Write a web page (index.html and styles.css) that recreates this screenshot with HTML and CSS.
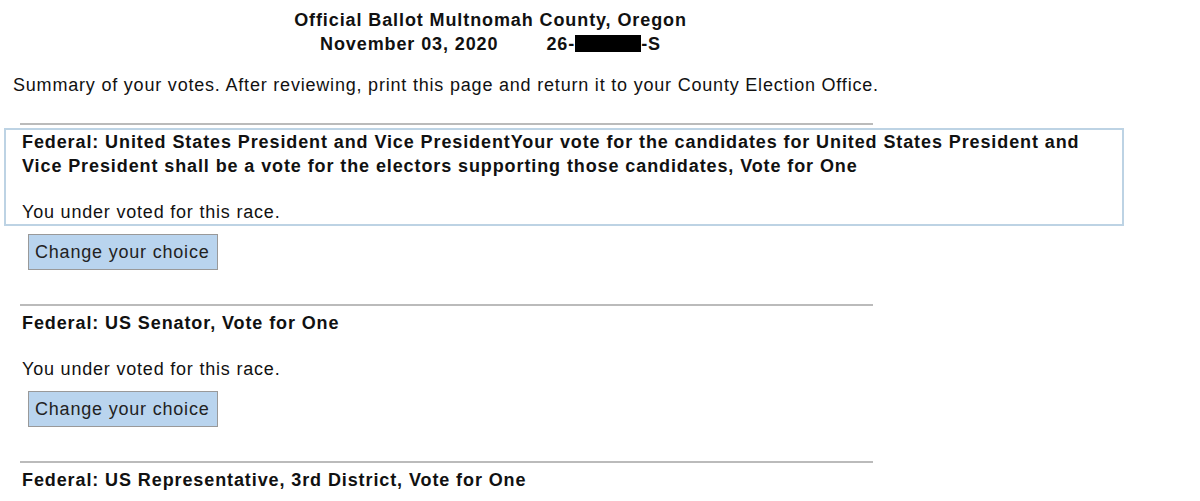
FILE: index.html
```html
<!DOCTYPE html>
<html lang="en">
<head>
  <meta charset="UTF-8" />
  <title>Ballot Summary</title>
  <link rel="stylesheet" href="styles.css">
</head>
<body>
  <div class="header">
    <div class="title">Official Ballot Multnomah County, Oregon</div>
    <div class="title">November 03, 2020<span class="ballot-id">26-<span class="redact"></span>-S</span></div>
  </div>

  <p class="summary">Summary of your votes. After reviewing, print this page and return it to your County Election Office.</p>

  <div class="race">
    <hr>
    <div class="race-box focused">
      <div class="race-title">Federal: United States President and Vice PresidentYour vote for the candidates for United States President and Vice President shall be a vote for the electors supporting those candidates, Vote for One</div>
      <div class="race-note">You under voted for this race.</div>
    </div>
    <button class="change">Change your choice</button>
  </div>

  <div class="race">
    <hr>
    <div class="race-box">
      <div class="race-title">Federal: US Senator, Vote for One</div>
      <div class="race-note">You under voted for this race.</div>
    </div>
    <button class="change">Change your choice</button>
  </div>

  <div class="race">
    <hr>
    <div class="race-box">
      <div class="race-title">Federal: US Representative, 3rd District, Vote for One</div>
    </div>
  </div>
</body>
</html>
```

FILE: styles.css
```css
body {
  font-family: "Liberation Sans", Arial, sans-serif;
  font-size: 18px;
  letter-spacing: 0.8px;
  color: #111;
  background: #fff;
  margin: 0;
  padding: 8px 0 0 0;
}
.header {
  width: 981px;
  text-align: center;
}
.title {
  font-weight: bold;
  letter-spacing: 0.9px;
  line-height: 24px;
}
.ballot-id {
  margin-left: 48px;
}
.redact {
  display: inline-block;
  width: 66px;
  height: 17px;
  background: #000;
  vertical-align: -2px;
}
.summary {
  margin: 17px 0 0 13px;
  line-height: 24px;
}
.race {
  width: 1120px;
  padding-left: 4px;
}
.race hr {
  width: 853px;
  margin: 26px 0 3px 16px;
  border: none;
  border-top: 2px solid #bbb;
}
.race-box {
  border: 2px solid transparent;
  padding: 0 16px;
}
.race-box.focused {
  border-color: #bdd3e4;
}
.race-title {
  font-weight: bold;
  letter-spacing: 0.9px;
  line-height: 24px;
}
.race-note {
  margin-top: 22px;
  line-height: 24px;
}
.change {
  margin: 8px 0 8px 24px;
  font-family: inherit;
  font-size: 18px;
  letter-spacing: 0.8px;
  color: #222;
  text-align: left;
  background: #b9d4ee;
  border: 1px solid #999;
  padding: 0 6px;
  height: 36px;
  width: 190px;
}
```
